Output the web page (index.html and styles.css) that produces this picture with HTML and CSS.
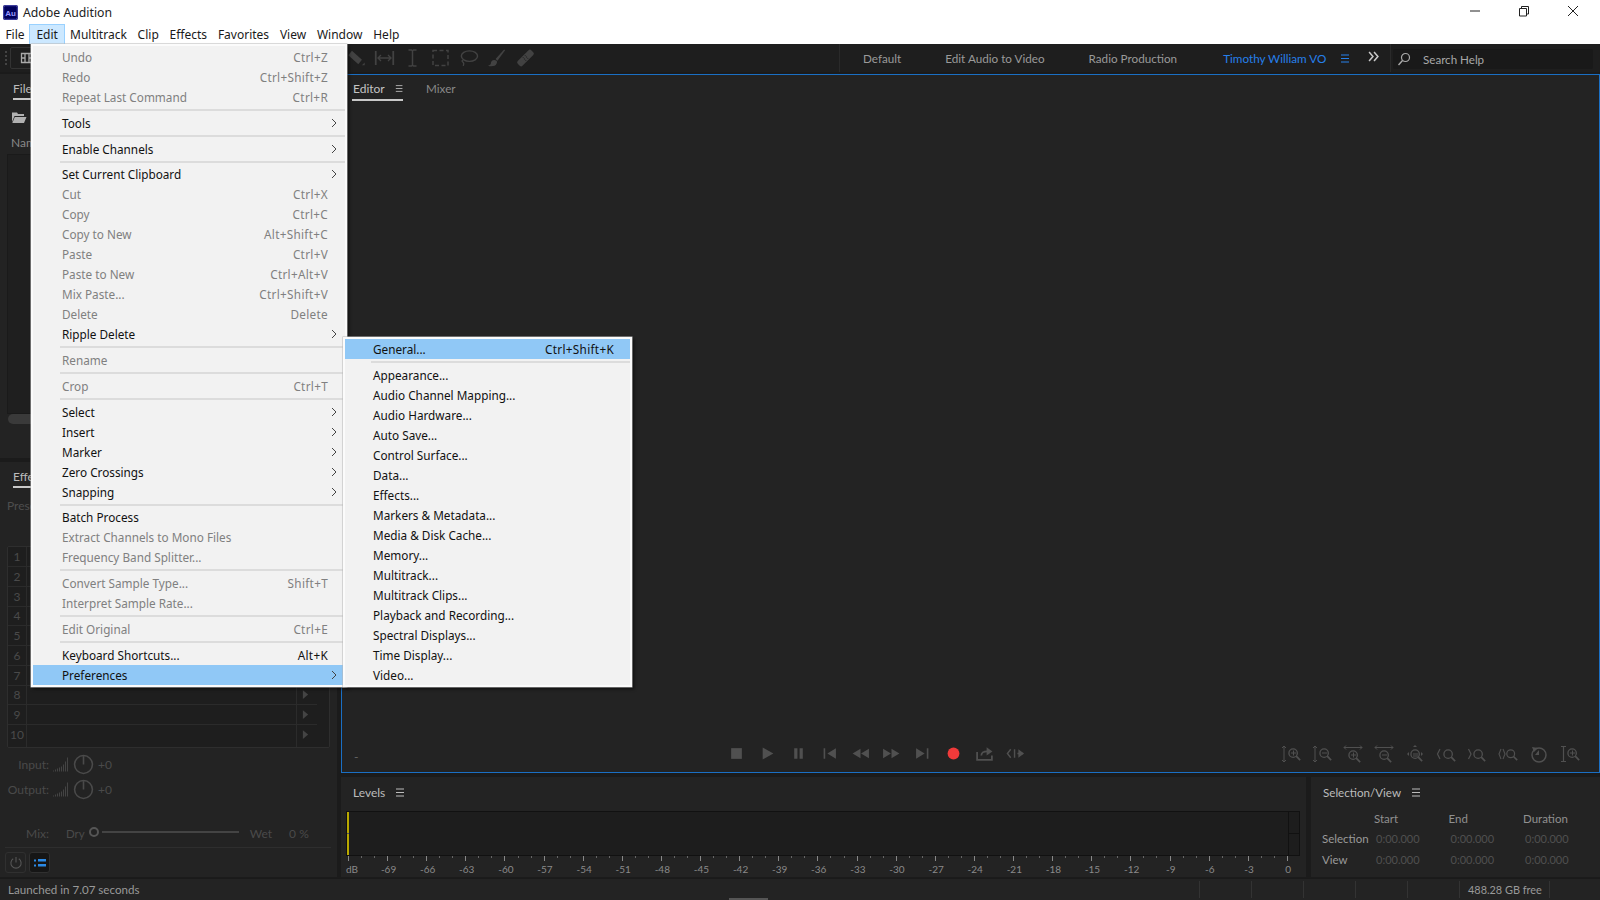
FILE: index.html
```html
<!DOCTYPE html>
<html lang="en">
<head>
<meta charset="utf-8">
<title>Adobe Audition</title>
<link rel="stylesheet" href="styles.css">
</head>
<body>
<svg class="defs" width="0" height="0" aria-hidden="true">
  <symbol id="burger" viewBox="0 0 10 9"><path d="M1 1h8M1 4.500h8M1 8h8" fill="none" stroke="currentColor" stroke-width="1"/></symbol>
  <symbol id="mag" viewBox="0 0 16 16"><circle cx="7" cy="7" r="4.800" fill="none" stroke="currentColor" stroke-width="1.500"/><path d="M10.500 10.500 15 15" stroke="currentColor" stroke-width="2"/></symbol>
  <symbol id="chev" viewBox="0 0 6 10"><path d="M1 1l4 4-4 4" fill="none" stroke="currentColor" stroke-width="1"/></symbol>
  <symbol id="tri" viewBox="0 0 8 12"><path d="M1 1l6 5-6 5z" fill="currentColor"/></symbol>
  <symbol id="bars" viewBox="0 0 16 15"><path d="M0.500 14.500v-1M2.500 14.500v-2M4.500 14.500v-3M6.500 14.500v-4M8.500 14.500v-5M10.500 14.500v-7M12.500 14.500v-10M14.500 14.500v-14" stroke="currentColor" stroke-width="1"/></symbol>
  <symbol id="knob" viewBox="0 0 20 20"><circle cx="10" cy="10" r="8.500" fill="none" stroke="currentColor" stroke-width="1.500"/><path d="M10 2v8" stroke="currentColor" stroke-width="1.500"/></symbol>
</svg>

<div class="app">
  <header class="titlebar">
    <svg class="au-logo" viewBox="0 0 15 15"><rect width="15" height="15" rx="2" fill="#00005b"/><rect x=".7" y=".7" width="13.600" height="13.600" rx="1.500" fill="#00005b" stroke="#9999ff" stroke-width=".5"/><text x="7.500" y="10.800" text-anchor="middle" class="au-text">Au</text></svg>
    <span class="app-title">Adobe Audition</span>
    <div class="winctl">
      <svg viewBox="0 0 12 12"><path d="M1 6h10" stroke="#222" stroke-width="1"/></svg>
      <svg viewBox="0 0 12 12"><path d="M1.500 3.500h7v7.500h-7zM3.500 3.500V1.500h7v7.500h-2" fill="none" stroke="#222" stroke-width="1"/></svg>
      <svg viewBox="0 0 12 12"><path d="M1 1l10 10M11 1L1 11" stroke="#222" stroke-width="1"/></svg>
    </div>
  </header>

  <nav class="menubar">
    <span>File</span><span class="open">Edit</span><span>Multitrack</span><span>Clip</span><span>Effects</span><span>Favorites</span><span>View</span><span>Window</span><span>Help</span>
  </nav>

  <div class="toolbar">
    <div class="tb-left">
      <span class="grip"></span>
      <span class="tb-box"><svg viewBox="0 0 14 12"><path d="M1.500 1.500h11v9h-11zM1.500 6h4M8.500 6h4M5 1.500v9M9 1.500v9" fill="none" stroke="#aaa" stroke-width="1.300"/></svg></span>
    </div>
    <div class="tb-tools">
      <svg viewBox="0 0 22 22"><path d="M6 3l11 10-4 5L2 8z" fill="currentColor"/><path d="M17 19l3-3v3z" fill="currentColor"/></svg>
      <svg viewBox="0 0 24 20"><path d="M2 2v16M22 2v16" stroke="currentColor" stroke-width="2"/><path d="M5 10h14M8 6.500L4.500 10 8 13.500M16 6.500l3.500 3.500-3.500 3.500" fill="none" stroke="currentColor" stroke-width="1.500"/></svg>
      <svg viewBox="0 0 14 20"><path d="M3 2h3l1 1 1-1h3M3 18h3l1-1 1 1h3M7 3v14" fill="none" stroke="currentColor" stroke-width="1.500"/></svg>
      <svg viewBox="0 0 20 20"><rect x="2.500" y="2.500" width="15" height="15" fill="none" stroke="currentColor" stroke-width="1.500" stroke-dasharray="4 2.500"/></svg>
      <svg viewBox="0 0 22 20"><ellipse cx="12" cy="8" rx="8.500" ry="5.500" fill="none" stroke="currentColor" stroke-width="1.500"/><path d="M5 12c-2 2 1 2 1 4s-1 2-1 2" fill="none" stroke="currentColor" stroke-width="1.500"/></svg>
      <svg viewBox="0 0 22 20"><path d="M19 1L10 11l2 2L20 2z" fill="currentColor"/><path d="M9 12c-3 0-4 2-4 4 0 1-2 2-3 2 3 1 8 1 9-2 .5-1 1-2 0-3z" fill="currentColor"/></svg>
      <svg viewBox="0 0 22 20"><g transform="rotate(-45 11 10)"><rect x="1" y="6.500" width="20" height="7" rx="2" fill="currentColor"/><path d="M9 8h1M12 8h1M9 10h1M12 10h1M9 12h1M12 12h1" stroke="#1f1f1f" stroke-width="1"/></g></svg>
    </div>
    <div class="workspaces">
      <span class="ws ws-default">Default</span>
      <span class="ws ws-edit">Edit Audio to Video</span>
      <span class="ws ws-radio">Radio Production</span>
      <span class="ws ws-active">Timothy William VO</span>
      <svg class="ws-burger"><use href="#burger"/></svg>
      <svg class="ws-more" viewBox="0 0 10 10"><path d="M1 1l3.500 4L1 9M5.500 1L9 5 5.500 9" fill="none" stroke="#c8c8c8" stroke-width="1.400"/></svg>
    </div>
    <div class="search">
      <svg viewBox="0 0 14 14"><circle cx="8.500" cy="5.500" r="4" fill="none" stroke="#aaa" stroke-width="1.200"/><path d="M5.500 8.500L1.500 13" stroke="#aaa" stroke-width="1.400"/></svg>
      <span>Search Help</span>
    </div>
  </div>

  <main class="workspace">
    <div class="leftcol">
      <section class="panel files">
        <div class="tabs"><span class="tab active">Files</span></div>
        <svg class="folder" viewBox="0 0 16 13"><path d="M1 3V1.500h5l1 1.500h6v2H3.500L1 11zM3.800 6H15.500L13 12H1.300z" fill="#b0b0b0"/></svg>
        <div class="col-name">Name</div>
        <div class="file-list"></div>
        <div class="hscroll"></div>
      </section>
      <section class="panel effects">
        <div class="tabs"><span class="tab active">Effects Rack</span></div>
        <div class="presets">Presets:</div>
        <div class="rack">
          <div class="rack-row"><b>1</b><i></i><u></u></div>
          <div class="rack-row"><b>2</b><i></i><u></u></div>
          <div class="rack-row"><b>3</b><i></i><u></u></div>
          <div class="rack-row"><b>4</b><i></i><u></u></div>
          <div class="rack-row"><b>5</b><i></i><u></u></div>
          <div class="rack-row"><b>6</b><i></i><u></u></div>
          <div class="rack-row"><b>7</b><i></i><u></u></div>
          <div class="rack-row"><b>8</b><i></i><u><svg><use href="#tri"/></svg></u></div>
          <div class="rack-row"><b>9</b><i></i><u><svg><use href="#tri"/></svg></u></div>
          <div class="rack-row"><b>10</b><i></i><u><svg><use href="#tri"/></svg></u></div>
        </div>
        <div class="gain"><label>Input:</label><svg class="g-bars"><use href="#bars"/></svg><svg class="g-knob"><use href="#knob"/></svg><span>+0</span></div>
        <div class="gain"><label>Output:</label><svg class="g-bars"><use href="#bars"/></svg><svg class="g-knob"><use href="#knob"/></svg><span>+0</span></div>
        <div class="mix"><label>Mix:</label><span class="dry">Dry</span><span class="mix-dot"></span><span class="mix-line"></span><span class="wet">Wet</span><span class="pct">0 %</span></div>
        <div class="rack-foot">
          <span class="fbtn"><svg viewBox="0 0 14 14"><path d="M4 3a5.500 5.500 0 1 0 6 0M7 1v6" fill="none" stroke="#555" stroke-width="1.200"/></svg></span>
          <span class="fbtn on"><svg viewBox="0 0 14 12"><path d="M1 3h2v2H1zM1 8h2v2H1zM5 2.500h8v2.500H5zM5 7.500h8V10H5z" fill="#2b8ae6"/></svg></span>
        </div>
      </section>
    </div>

    <div class="rightcol">
      <section class="editor">
        <div class="ed-tabs">
          <span class="ed-tab"><span>Editor</span><svg><use href="#burger"/></svg></span>
          <span class="mixer">Mixer</span>
        </div>
        <div class="ed-body"></div>
        <div class="ed-foot">
          <span class="dash">-</span>
          <div class="transport">
            <svg viewBox="0 0 14 14"><rect x="2" y="2" width="10" height="10" fill="currentColor"/></svg>
            <svg viewBox="0 0 14 14"><path d="M2.500 1.500l10 5.500-10 5.500z" fill="currentColor"/></svg>
            <svg viewBox="0 0 14 14"><path d="M3 2h3v10H3zM8 2h3v10H8z" fill="currentColor"/></svg>
            <svg viewBox="0 0 14 14"><path d="M1.500 2h1.500v10H1.500zM13 2v10L5 7z" fill="currentColor"/></svg>
            <svg class="wide" viewBox="0 0 18 14"><path d="M9 2.500v9L1.500 7zM17 2.500v9L9.500 7z" fill="currentColor"/></svg>
            <svg class="wide" viewBox="0 0 18 14"><path d="M1 2.500v9L8.500 7zM9 2.500v9L16.500 7z" fill="currentColor"/></svg>
            <svg viewBox="0 0 14 14"><path d="M1 2v10l8-5zM11 2h1.500v10H11z" fill="currentColor"/></svg>
            <svg class="rec" viewBox="0 0 14 14"><circle cx="7" cy="7" r="5.500" fill="#f03a3a"/></svg>
            <svg class="wide" viewBox="0 0 18 14"><path d="M2 5.500v7.500h14V9M6 9c0-3 2-4 6-4" fill="none" stroke="currentColor" stroke-width="1.700"/><path d="M11 1l5.500 4L11 9z" fill="currentColor"/></svg>
            <svg class="wide" viewBox="0 0 20 14"><path d="M5 2.500L1.500 7 5 11.500M9 2.500v9M12 7h6" fill="none" stroke="currentColor" stroke-width="1.500"/><path d="M13 2.500l6 4.500-6 4.500z" fill="currentColor"/></svg>
          </div>
          <div class="zooms">
            <svg viewBox="0 0 20 18"><path d="M3 1v16M1 3l2-2 2 2M1 15l2 2 2-2" fill="none" stroke="currentColor" stroke-width="1"/><use href="#mag" x="6" y="2" width="14" height="14"/><path d="M10 8h5M12.500 5.500v5" stroke="currentColor"/></svg>
            <svg viewBox="0 0 20 18"><path d="M3 1v16M1 3l2-2 2 2M1 15l2 2 2-2" fill="none" stroke="currentColor" stroke-width="1"/><use href="#mag" x="6" y="2" width="14" height="14"/><path d="M10 8h5" stroke="currentColor"/></svg>
            <svg viewBox="0 0 20 18"><path d="M1 2.500h18M3 .5L1 2.500l2 2M17 .5l2 2-2 2" fill="none" stroke="currentColor" stroke-width="1"/><use href="#mag" x="4" y="4" width="14" height="14"/><path d="M8 10h5M10.500 7.500v5" stroke="currentColor"/></svg>
            <svg viewBox="0 0 20 18"><path d="M1 2.500h18M3 .5L1 2.500l2 2M17 .5l2 2-2 2" fill="none" stroke="currentColor" stroke-width="1"/><use href="#mag" x="4" y="4" width="14" height="14"/><path d="M8 10h5" stroke="currentColor"/></svg>
            <svg viewBox="0 0 20 18"><path d="M2 9l2-2v4zM18 9l-2-2v4zM10 0l-2 2h4z" fill="currentColor"/><use href="#mag" x="4" y="3" width="14" height="14"/><path d="M8 9h5M8 11h5" stroke="currentColor"/></svg>
            <svg viewBox="0 0 20 18"><path d="M4 4L1.500 9 4 14" fill="none" stroke="currentColor" stroke-width="1.200"/><use href="#mag" x="6" y="3" width="14" height="14"/></svg>
            <svg viewBox="0 0 20 18"><path d="M1.500 4L4 9l-2.500 5" fill="none" stroke="currentColor" stroke-width="1.200"/><use href="#mag" x="5" y="3" width="14" height="14"/></svg>
            <svg viewBox="0 0 20 18"><path d="M3 4L1 9l2 5M5 4l2 5-2 5" fill="none" stroke="currentColor" stroke-width="1.100"/><use href="#mag" x="7" y="3" width="13" height="13"/></svg>
            <svg viewBox="0 0 20 18"><circle cx="10" cy="10" r="7" fill="none" stroke="currentColor" stroke-width="1.500"/><path d="M10 5v5H6z" fill="currentColor"/><path d="M3 2l6 1-4 4z" fill="currentColor"/></svg>
            <svg viewBox="0 0 20 18"><path d="M1 1.500h5M1 16.500h5M3.500 1.500v15" fill="none" stroke="currentColor" stroke-width="1.200"/><use href="#mag" x="6" y="2" width="14" height="14"/><path d="M10 8h5M12.500 5.500v5" stroke="currentColor"/></svg>
          </div>
        </div>
      </section>

      <div class="bottomrow">
        <section class="panel levels">
          <div class="lv-head"><span>Levels</span><svg><use href="#burger"/></svg></div>
          <div class="meter"><div class="meter-main"><span class="yellow"></span></div><div class="meter-clip"><span></span><span></span></div></div>
          <div class="ticks"></div>
          <div class="scale">
            <span class="db">dB</span><span>-69</span><span>-66</span><span>-63</span><span>-60</span><span>-57</span><span>-54</span><span>-51</span><span>-48</span><span>-45</span><span>-42</span><span>-39</span><span>-36</span><span>-33</span><span>-30</span><span>-27</span><span>-24</span><span>-21</span><span>-18</span><span>-15</span><span>-12</span><span>-9</span><span>-6</span><span>-3</span><span>0</span>
          </div>
        </section>
        <section class="panel selview">
          <div class="lv-head"><span>Selection/View</span><svg><use href="#burger"/></svg></div>
          <div class="sv-grid">
            <span></span><span class="h">Start</span><span class="h">End</span><span class="h">Duration</span>
            <span class="l">Selection</span><span class="v">0:00.000</span><span class="v">0:00.000</span><span class="v">0:00.000</span>
            <span class="l">View</span><span class="v">0:00.000</span><span class="v">0:00.000</span><span class="v">0:00.000</span>
          </div>
        </section>
      </div>
    </div>
  </main>

  <footer class="status">
    <span class="st-text">Launched in 7.07 seconds</span>
    <div class="st-cells"><i></i><i></i><i></i><i></i><i></i><i class="free">488.28 GB free</i></div>
    <span class="handle"></span>
  </footer>

  <div class="menu edit-menu">
    <div class="mi off"><span>Undo</span><kbd>Ctrl+Z</kbd></div>
    <div class="mi off"><span>Redo</span><kbd>Ctrl+Shift+Z</kbd></div>
    <div class="mi off"><span>Repeat Last Command</span><kbd>Ctrl+R</kbd></div>
    <hr>
    <div class="mi sub"><span>Tools</span><svg><use href="#chev"/></svg></div>
    <hr>
    <div class="mi sub"><span>Enable Channels</span><svg><use href="#chev"/></svg></div>
    <hr>
    <div class="mi sub"><span>Set Current Clipboard</span><svg><use href="#chev"/></svg></div>
    <div class="mi off"><span>Cut</span><kbd>Ctrl+X</kbd></div>
    <div class="mi off"><span>Copy</span><kbd>Ctrl+C</kbd></div>
    <div class="mi off"><span>Copy to New</span><kbd>Alt+Shift+C</kbd></div>
    <div class="mi off"><span>Paste</span><kbd>Ctrl+V</kbd></div>
    <div class="mi off"><span>Paste to New</span><kbd>Ctrl+Alt+V</kbd></div>
    <div class="mi off"><span>Mix Paste...</span><kbd>Ctrl+Shift+V</kbd></div>
    <div class="mi off"><span>Delete</span><kbd>Delete</kbd></div>
    <div class="mi sub"><span>Ripple Delete</span><svg><use href="#chev"/></svg></div>
    <hr>
    <div class="mi off"><span>Rename</span></div>
    <hr>
    <div class="mi off"><span>Crop</span><kbd>Ctrl+T</kbd></div>
    <hr>
    <div class="mi sub"><span>Select</span><svg><use href="#chev"/></svg></div>
    <div class="mi sub"><span>Insert</span><svg><use href="#chev"/></svg></div>
    <div class="mi sub"><span>Marker</span><svg><use href="#chev"/></svg></div>
    <div class="mi sub"><span>Zero Crossings</span><svg><use href="#chev"/></svg></div>
    <div class="mi sub"><span>Snapping</span><svg><use href="#chev"/></svg></div>
    <hr>
    <div class="mi"><span>Batch Process</span></div>
    <div class="mi off"><span>Extract Channels to Mono Files</span></div>
    <div class="mi off"><span>Frequency Band Splitter...</span></div>
    <hr>
    <div class="mi off"><span>Convert Sample Type...</span><kbd>Shift+T</kbd></div>
    <div class="mi off"><span>Interpret Sample Rate...</span></div>
    <hr>
    <div class="mi off"><span>Edit Original</span><kbd>Ctrl+E</kbd></div>
    <hr>
    <div class="mi"><span>Keyboard Shortcuts...</span><kbd>Alt+K</kbd></div>
    <div class="mi sub hl"><span>Preferences</span><svg><use href="#chev"/></svg></div>
  </div>

  <div class="menu pref-menu">
    <div class="mi hl"><span>General...</span><kbd>Ctrl+Shift+K</kbd></div>
    <hr>
    <div class="mi"><span>Appearance...</span></div>
    <div class="mi"><span>Audio Channel Mapping...</span></div>
    <div class="mi"><span>Audio Hardware...</span></div>
    <div class="mi"><span>Auto Save...</span></div>
    <div class="mi"><span>Control Surface...</span></div>
    <div class="mi"><span>Data...</span></div>
    <div class="mi"><span>Effects...</span></div>
    <div class="mi"><span>Markers &amp; Metadata...</span></div>
    <div class="mi"><span>Media &amp; Disk Cache...</span></div>
    <div class="mi"><span>Memory...</span></div>
    <div class="mi"><span>Multitrack...</span></div>
    <div class="mi"><span>Multitrack Clips...</span></div>
    <div class="mi"><span>Playback and Recording...</span></div>
    <div class="mi"><span>Spectral Displays...</span></div>
    <div class="mi"><span>Time Display...</span></div>
    <div class="mi"><span>Video...</span></div>
  </div>
</div>
</body>
</html>
```

FILE: styles.css
```css
* { box-sizing: border-box; }
html, body { margin: 0; height: 100%; overflow: hidden; background: #1b1b1b; }
body { font-family: "Lato", "Liberation Sans", sans-serif; font-size: 12px; }
.defs { position: absolute; }
svg { display: block; }
kbd { font: inherit; letter-spacing: .3px; }

.app { position: relative; width: 1600px; height: 900px; display: flex; flex-direction: column; overflow: hidden; }

/* window chrome */
.titlebar { height: 24px; background: #fff; display: flex; align-items: center; padding-left: 3px; flex: none; }
.au-logo { width: 15px; height: 15px; }
.au-text { font: bold 8px "Liberation Sans", sans-serif; fill: #9999ff; }
.app-title { margin-left: 5px; font: 12.250px "Noto Sans", sans-serif; color: #222; }
.winctl { margin-left: auto; display: flex; gap: 37px; padding-right: 21px; margin-top: -2px; }
.winctl svg { width: 12px; height: 12px; }

.menubar { height: 20.500px; background: #fff; flex: none; display: flex; align-items: flex-end; font: 12px "Noto Sans", sans-serif; color: #1a1a1a; border-bottom: 1px solid #e0e0e0; }
.menubar span { height: 20px; line-height: 19px; padding: 0 4.400px; border: 1px solid transparent; border-bottom: 0; }
.menubar .open { background: #cce8ff; border-color: #99d1ff; margin: 0 0 0 -1px; padding: 0 5.800px 0 6.400px; }

/* toolbar */
.toolbar { height: 28px; background: #1e1e1e; flex: none; display: flex; align-items: center; color: #424242; margin-top: -.5px; }
.tb-left { width: 343px; display: flex; align-items: center; gap: 3px; padding-left: 5px; flex: none; }
.grip { width: 2px; height: 14px; border-left: 2px dotted #444; }
.tb-box { width: 40px; height: 22px; border: 1px solid #333; border-radius: 2px; display: flex; align-items: center; justify-content: flex-start; padding-left: 9px; }
.tb-box svg { width: 14px; height: 12px; }
.tb-tools { display: flex; align-items: center; gap: 7.200px; padding-left: 2.500px; width: 497px; height: 100%; border-right: 1px solid #2a2a2a; flex: none; }
.tb-tools svg { width: 21px; height: 20px; }
.workspaces { flex: 1; display: flex; align-items: center; height: 100%; position: relative; border-right: 1px solid #2a2a2a; color: #9a9a9a; font-size: 11.700px; }
.ws { white-space: nowrap; }
.ws-default { margin-left: 23px; }
.ws-edit { margin-left: 44px; }
.ws-radio { margin-left: 44px; }
.ws-active { margin-left: 46px; color: #2680eb; }
.ws-burger { width: 10px; height: 9px; color: #2680eb; margin-left: 14px; }
.ws-more { width: 11px; height: 11px; margin-left: 18px; margin-top: -3px; }
.search { width: 200px; height: 20px; margin: 2px 7px 0 2px; background: #191919; border-radius: 2px; display: flex; align-items: center; gap: 12px; padding-left: 4px; color: #a8a8a8; flex: none; font-size: 11.600px; }
.search svg { width: 14px; height: 14px; }

/* workspace */
.workspace { flex: 1; display: grid; grid-template-columns: 337px 1fr; column-gap: 4px; padding: 2px 2px 1px 0; min-height: 0; }
.leftcol { display: flex; flex-direction: column; gap: 4px; min-height: 0; }
.rightcol { display: flex; flex-direction: column; gap: 4px; min-height: 0; margin-right: -2px; }
.panel { background: #232323; }
.tabs { height: 26px; padding: 7px 0 0 13px; color: #bbb; }
.tab { display: inline-block; height: 19px; padding: 0 40px 0 0; border-bottom: 2px solid #c8c8c8; margin-left: -1px; }

.files { height: 384px; display: flex; flex-direction: column; padding-left: 1px; }
.folder { width: 16px; height: 13px; margin: 11px 0 0 10px; }
.col-name { color: #888; margin: 11px 0 0 10px; }
.file-list { height: 260px; margin: 4px 0 0 6px; background: #1f1f1f; border: 1px solid #1a1a1a; }
.hscroll { width: 40px; height: 10px; background: #3a3a3a; border-radius: 5px; margin: 0 0 0 7px; }

.effects { flex: 1; padding-left: 1px; display: flex; flex-direction: column; min-height: 0; }
.presets { color: #4e4e4e; margin: 10px 0 0 6px; height: 15px; }
.rack { margin: 33px 0 0 6px; width: 323px; height: 202px; border: 1px solid #2e2e2e; border-radius: 2px; overflow: hidden; }
.rack-row { height: 19.750px; display: grid; grid-template-columns: 19px 270px 20px 1fr; background: #1e1e1e; }
.rack-row:last-child { height: 24px; }
.rack-row b { font-weight: 400; text-align: center; line-height: 19px; color: #4a4a4a; border-right: 1px solid #2b2b2b; border-bottom: 1px solid #2b2b2b; }
.rack-row i { border-bottom: 1px solid #2b2b2b; border-right: 1px solid #2b2b2b; }
.rack-row u { border-bottom: 1px solid #2b2b2b; display: block; padding: 4px 0 0 5px; }
.rack-row u svg { width: 7px; height: 11px; color: #444; }
.gain { display: flex; align-items: center; height: 25px; color: #4a4a4a; }
.rack + .gain { margin-top: 4px; }
.gain label { width: 48px; text-align: right; }
.g-bars { width: 16px; height: 15px; margin-left: 4px; color: #444; }
.g-knob { width: 21px; height: 21px; margin-left: 4px; color: #4a4a4a; }
.gain span { margin-left: 4px; }
.mix { display: flex; align-items: center; margin-top: 21px; height: 20px; color: #4a4a4a; }
.mix label { width: 48px; text-align: right; }
.dry { margin-left: 17px; font-size: 11.500px; }
.mix-dot { width: 10px; height: 10px; border: 2px solid #555; border-radius: 50%; margin-left: 4px; margin-top: -3px; }
.mix-line { width: 137px; height: 2px; background: #444; margin-left: 3px; margin-top: -3px; }
.wet { margin-left: 11px; }
.pct { margin-left: 17px; }
.rack-foot { margin: 4px 6px 0 4px; padding-top: 4px; border-top: 1px solid #2e2e2e; display: flex; gap: 3px; }
.fbtn { width: 21px; height: 21px; border: 1px solid #303030; border-radius: 3px; display: flex; align-items: center; justify-content: center; }
.fbtn svg { width: 14px; height: 13px; }
.fbtn.on { background: #161616; }

/* editor */
.editor { flex: 1; background: #232323; border: 1px solid #1a6fc4; display: flex; flex-direction: column; min-height: 0; }
.ed-tabs { height: 26px; display: flex; padding: 6px 0 0 10px; color: #c4c4c4; flex: none; }
.ed-tab { width: 51px; height: 20px; border-bottom: 2px solid #c8c8c8; display: flex; gap: 10px; padding: 0 0 0 1px; }
.ed-tab svg { width: 10px; height: 9px; margin-top: 3px; }
.mixer { margin-left: 23px; color: #888; font-size: 11.700px; }
.ed-body { flex: 1; }
.ed-foot { height: 39px; flex: none; display: flex; align-items: center; color: #505050; position: relative; padding-top: 2px; }
.dash { position: absolute; left: 12px; bottom: 8px; color: #666; }
.transport { display: flex; align-items: center; margin-left: 387px; gap: 16px; }
.transport svg { width: 15px; height: 15px; }
.transport .wide { width: 19px; height: 15px; margin: 0 -2px; }
.zooms { display: flex; align-items: center; margin-left: 258px; gap: 11px; }
.zooms svg { width: 20px; height: 18px; }

.bottomrow { height: 100px; display: flex; gap: 5px; flex: none; }
.levels { width: 965px; padding: 0 6px 0 5px; }
.selview { flex: 1; }
.lv-head { height: 34px; display: flex; align-items: center; gap: 10px; padding: 0 0 4px 7px; color: #bcbcbc; }
.lv-head svg { width: 10px; height: 9px; }
.selview .lv-head { padding-left: 12px; font-size: 11.600px; }
.meter { height: 45px; display: flex; background: #1d1d1d; border: 1px solid #111; }
.meter-main { flex: 1; border-right: 1px solid #111; }
.yellow { display: block; width: 2px; height: 100%; background: linear-gradient(#b8a800 0 48%, #555 48% 52%, #b8a800 52%); }
.meter-clip { width: 10px; display: flex; flex-direction: column; }
.meter-clip span { flex: 1; }
.meter-clip span + span { border-top: 1px solid #111; }
.ticks { height: 5px; margin-left: 2px; background:
  repeating-linear-gradient(90deg, #888 0 1px, transparent 1px 39.120px) 0 0 / 100% 5px no-repeat,
  repeating-linear-gradient(90deg, #666 0 1px, transparent 1px 13.040px) 0 0 / 100% 2px no-repeat; }
.scale { display: flex; color: #8a8a8a; font-size: 10px; margin-top: 2px; }
.scale span { width: 39.120px; text-align: center; flex: none; }
.scale .db { width: 23px; text-align: left; }
.sv-grid { display: grid; grid-template-columns: 52px 74.500px 74.500px 74.500px; grid-auto-rows: 20.500px; padding-left: 11px; align-items: center; color: #aaa; margin-top: -3px; }
.sv-grid .h { color: #909090; font-size: 11.500px; }
.sv-grid .l { color: #9a9a9a; font-size: 11.500px; }
.sv-grid .v { color: #505050; padding-left: 2px; font-size: 11px; }

/* status */
.status { height: 22px; background: #232323; flex: none; display: flex; align-items: center; padding-left: 8px; color: #999; position: relative; border-top: 1px solid #1a1a1a; font-size: 11.600px; }
.st-cells { margin-left: auto; display: flex; height: 17px; margin-right: 50px; }
.st-cells i { font-style: normal; width: 52px; border-left: 1px solid #333; }
.st-cells .free { width: 91px; border-right: 1px solid #333; padding-left: 8px; line-height: 17px; white-space: nowrap; font-size: 10.900px; }
.handle { position: absolute; left: 729px; bottom: 0; width: 39px; height: 2px; background: #555; }

/* menus */
.menu { position: absolute; background: #f2f2f2; border: 2px solid #fbfbfb; box-shadow: 0 0 0 .5px #bbb, 2px 2px 3px rgba(0,0,0,.6); font: 11.750px "Noto Sans", sans-serif; color: #111; }
.mi { height: 20px; display: flex; align-items: center; justify-content: space-between; white-space: nowrap; }
.mi.off { color: #808080; }
.mi.hl { background: #90c8f6; }
.mi svg { color: #444; }
.menu hr { margin: 0; border: 0; height: 5.770px; position: relative; }
.menu hr::after { content: ""; position: absolute; right: 0; top: 2px; height: 2px; background: #dcdcdc; }
.edit-menu { left: 31px; top: 44px; width: 316px; padding-top: 1px; }
.edit-menu .mi { padding: 0 17px 0 29px; }
.edit-menu .mi.sub { padding-right: 8px; }
.edit-menu .mi svg { width: 6px; height: 10px; }
.edit-menu hr::after { left: 27px; }
.pref-menu { left: 343px; top: 337px; width: 289px; }
.pref-menu hr { height: 6px; }
.pref-menu .mi { padding: 0 16px 0 28px; }
.pref-menu hr::after { left: 26px; }
```
